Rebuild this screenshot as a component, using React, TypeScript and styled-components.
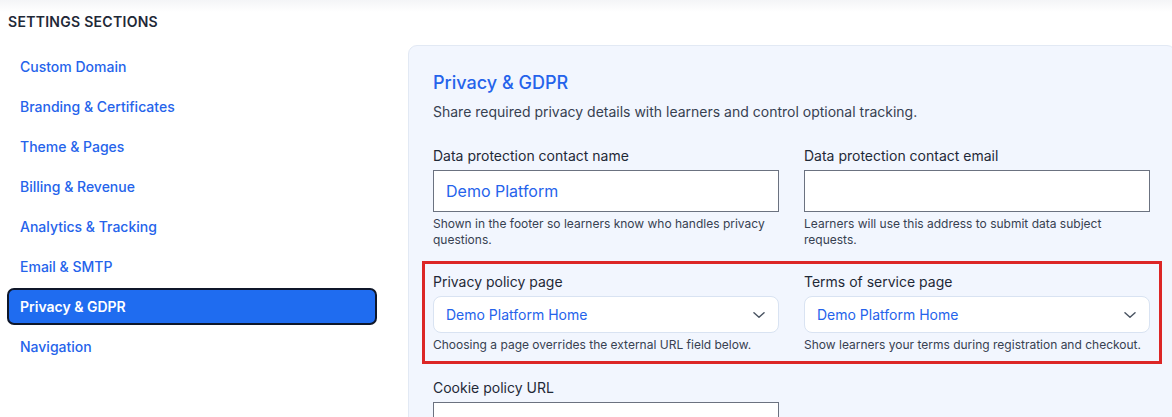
import React from "react";
import styled, { createGlobalStyle } from "styled-components";

const Global = createGlobalStyle`
  html, body {
    margin: 0;
    padding: 0;
    overflow: hidden;
    background: linear-gradient(#f4f5f7 0px, #ffffff 12px);
    font-family: Inter, "Noto Sans", "Liberation Sans", sans-serif;
    -webkit-font-smoothing: antialiased;
  }
  * { box-sizing: border-box; }
`;

const Page = styled.div`
  display: flex;
  align-items: flex-start;
  gap: 31px;
  width: 1176px;
  height: 417px;
`;

const Sidebar = styled.aside`
  width: 370px;
  flex: none;
  margin-left: 7px;
  padding-top: 12px;
`;

const SidebarTitle = styled.div`
  font-size: 14px;
  line-height: 20px;
  font-weight: 600;
  letter-spacing: 0.02em;
  text-transform: uppercase;
  color: #1f2937;
  padding-left: 1px;
`;

const NavList = styled.nav`
  display: flex;
  flex-direction: column;
  gap: 3px;
  margin-top: 16px;
`;

const NavItem = styled.a<{ $active?: boolean }>`
  display: flex;
  align-items: center;
  height: 37px;
  padding: 0 11px;
  border: 2px solid ${(p) => (p.$active ? "#0f172a" : "transparent")};
  border-radius: 7px;
  background: ${(p) => (p.$active ? "#1f6cf0" : "transparent")};
  color: ${(p) => (p.$active ? "#ffffff" : "#2563eb")};
  font-size: 14px;
  font-weight: ${(p) => (p.$active ? 600 : 500)};
  text-decoration: none;
`;

const Panel = styled.section`
  flex: none;
  width: 768px;
  margin-top: 45px;
  height: 400px;
  padding: 24px 24px;
  background: #f2f6fe;
  border: 1px solid #e2e9f4;
  border-radius: 9px;
`;

const Title = styled.h2`
  margin: 0;
  font-size: 18px;
  line-height: 26px;
  font-weight: 500;
  color: #2563eb;
`;

const Subtitle = styled.p`
  margin: 6px 0 0;
  font-size: 14px;
  line-height: 20px;
  color: #374151;
`;

const FieldGrid = styled.div`
  display: grid;
  grid-template-columns: 346px 346px;
  column-gap: 25px;
  margin-top: 24px;
`;

const Highlight = styled(FieldGrid)`
  margin-top: 24px;
  padding-top: 0;
  outline: 3px solid #dc2626;
  outline-offset: 8px;
`;

const Field = styled.div`
  display: flex;
  flex-direction: column;
  min-width: 0;
`;

const Label = styled.label`
  font-size: 14px;
  line-height: 20px;
  font-weight: 400;
  color: #1f2937;
`;

const TextInput = styled.div`
  margin-top: 4px;
  height: 42px;
  display: flex;
  align-items: center;
  padding: 0 12px;
  background: #ffffff;
  border: 1px solid #6b7280;
  font-size: 16px;
  color: #2563eb;
`;

const Select = styled.div`
  margin-top: 4px;
  height: 37px;
  display: flex;
  align-items: center;
  justify-content: space-between;
  padding: 0 8px 0 12px;
  background: #ffffff;
  border: 1px solid #d9e3f2;
  border-radius: 8px;
  font-size: 14px;
  color: #2563eb;
`;

const Chevron = styled.svg`
  width: 22px;
  height: 22px;
  color: #4b5563;
  flex: none;
`;

const Help = styled.p`
  margin: 4px 0 0;
  font-size: 12px;
  line-height: 16px;
  color: #374151;
`;

const CookieField = styled(Field)`
  margin-top: 25px;
  width: 346px;
`;

const navItems = [
  "Custom Domain",
  "Branding & Certificates",
  "Theme & Pages",
  "Billing & Revenue",
  "Analytics & Tracking",
  "Email & SMTP",
  "Privacy & GDPR",
  "Navigation",
];

const ChevronDown = () => (
  <Chevron viewBox="0 0 24 24" fill="none" stroke="currentColor" strokeWidth={1.6} strokeLinecap="round" strokeLinejoin="round">
    <path d="M6.5 9.5l5.5 5 5.5-5" />
  </Chevron>
);

export default function App() {
  return (
    <>
      <Global />
      <Page>
        <Sidebar>
          <SidebarTitle>Settings Sections</SidebarTitle>
          <NavList>
            {navItems.map((n) => (
              <NavItem key={n} $active={n === "Privacy & GDPR"}>
                {n}
              </NavItem>
            ))}
          </NavList>
        </Sidebar>
        <Panel>
          <Title>Privacy &amp; GDPR</Title>
          <Subtitle>Share required privacy details with learners and control optional tracking.</Subtitle>
          <FieldGrid>
            <Field>
              <Label>Data protection contact name</Label>
              <TextInput>Demo Platform</TextInput>
              <Help>Shown in the footer so learners know who handles privacy questions.</Help>
            </Field>
            <Field>
              <Label>Data protection contact email</Label>
              <TextInput />
              <Help>Learners will use this address to submit data subject requests.</Help>
            </Field>
          </FieldGrid>
          <Highlight>
            <Field>
              <Label>Privacy policy page</Label>
              <Select>
                Demo Platform Home
                <ChevronDown />
              </Select>
              <Help>Choosing a page overrides the external URL field below.</Help>
            </Field>
            <Field>
              <Label>Terms of service page</Label>
              <Select>
                Demo Platform Home
                <ChevronDown />
              </Select>
              <Help>Show learners your terms during registration and checkout.</Help>
            </Field>
          </Highlight>
          <CookieField>
            <Label>Cookie policy URL</Label>
            <TextInput />
          </CookieField>
        </Panel>
      </Page>
    </>
  );
}
